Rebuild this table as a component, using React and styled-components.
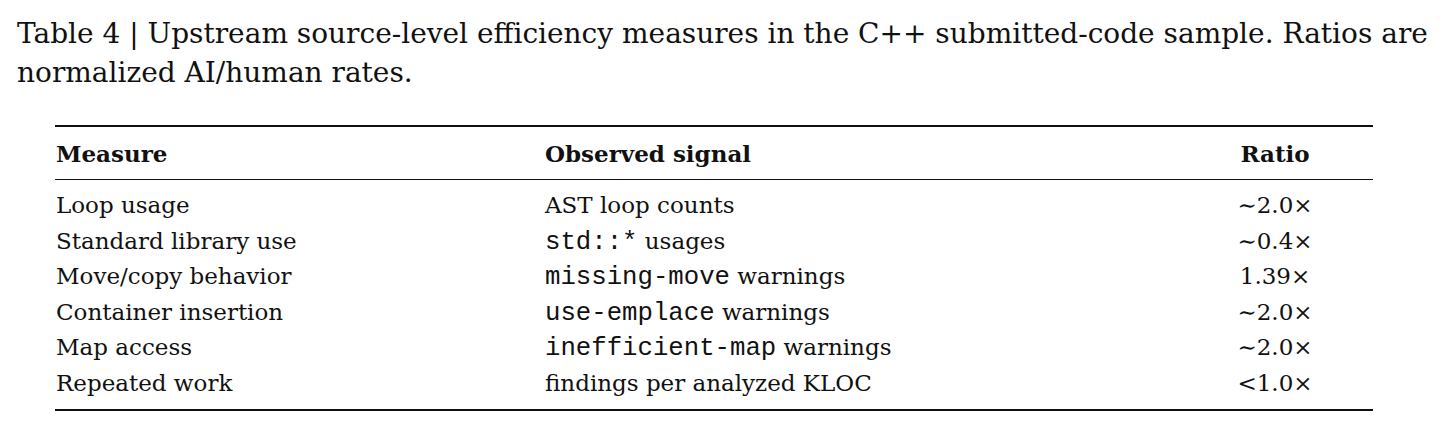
import React from 'react';
import styled, { createGlobalStyle } from 'styled-components';

const Global = createGlobalStyle`
  html, body { margin: 0; padding: 0; background: #ffffff; }
  body { font-family: "DejaVu Serif", "Liberation Serif", serif; color: #111111; }
`;

const Page = styled.div`
  width: 1443px;
  box-sizing: border-box;
  padding: 14px 17px 0 17px;
`;

const Caption = styled.p`
  margin: 0;
  font-size: 28px;
  line-height: 39px;
  white-space: nowrap;
`;

const Table = styled.table`
  margin: 33px 0 0 38px;
  width: 1318px;
  border-collapse: collapse;
  border-top: 2px solid #111111;
  border-bottom: 2.4px solid #111111;
  font-size: 23px;
  table-layout: fixed;
`;

const Th = styled.th`
  height: 51px;
  padding: 1px 0 0 ${(p) => (p.$first ? '1px' : '0')};
  text-align: ${(p) => p.$align || 'left'};
  font-weight: bold;
  vertical-align: middle;
  border-bottom: 1.4px solid #111111;
`;

const Tr = styled.tr`
  &:first-child td { padding-top: 8px; }
  &:last-child td { padding-bottom: 7.5px; }
`;

const Td = styled.td`
  height: 35.5px;
  line-height: 35.5px;
  padding: 0 0 0 ${(p) => (p.$first ? '1px' : '0')};
  text-align: ${(p) => p.$align || 'left'};
  white-space: nowrap;
  vertical-align: top;
`;

const Code = styled.span`
  font-family: "Liberation Mono", "DejaVu Sans Mono", monospace;
  font-size: 25.7px;
  line-height: 20px;
`;

const rows = [
  { measure: 'Loop usage', signal: <>AST loop counts</>, ratio: '∼2.0×' },
  { measure: 'Standard library use', signal: <><Code>std::*</Code> usages</>, ratio: '∼0.4×' },
  { measure: 'Move/copy behavior', signal: <><Code>missing-move</Code> warnings</>, ratio: '1.39×' },
  { measure: 'Container insertion', signal: <><Code>use-emplace</Code> warnings</>, ratio: '∼2.0×' },
  { measure: 'Map access', signal: <><Code>inefficient-map</Code> warnings</>, ratio: '∼2.0×' },
  { measure: 'Repeated work', signal: <>findings per analyzed KLOC</>, ratio: '<1.0×' },
];

export default function App() {
  return (
    <Page>
      <Global />
      <Caption>
        Table 4 | Upstream source-level efficiency measures in the C++ submitted-code sample. Ratios are
        <br />
        normalized AI/human rates.
      </Caption>
      <Table>
        <colgroup>
          <col style={{ width: '490px' }} />
          <col />
          <col style={{ width: '196px' }} />
        </colgroup>
        <thead>
          <tr>
            <Th $first>Measure</Th>
            <Th>Observed signal</Th>
            <Th $align="center">Ratio</Th>
          </tr>
        </thead>
        <tbody>
          {rows.map((r) => (
            <Tr key={r.measure}>
              <Td $first>{r.measure}</Td>
              <Td>{r.signal}</Td>
              <Td $align="center">{r.ratio}</Td>
            </Tr>
          ))}
        </tbody>
      </Table>
    </Page>
  );
}
